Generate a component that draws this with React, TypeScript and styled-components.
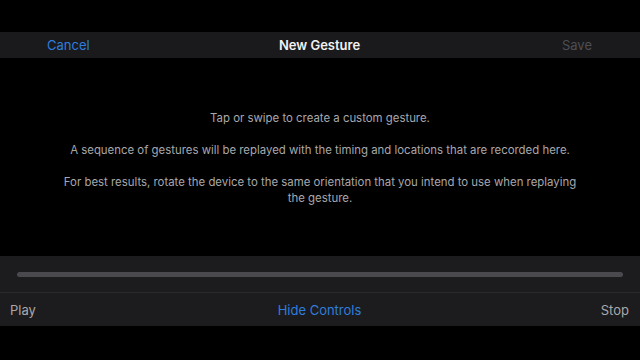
import React from 'react'
import styled, { createGlobalStyle } from 'styled-components'

const GlobalStyle = createGlobalStyle`
  html, body {
    margin: 0;
    padding: 0;
    background: #000;
    font-family: Inter, 'Noto Sans', sans-serif;
    -webkit-font-smoothing: antialiased;
  }
`

const Screen = styled.div`
  width: 640px;
  height: 360px;
  background: #000;
  display: flex;
  flex-direction: column;
  overflow: hidden;
`

const TopGap = styled.div`
  height: 32px;
  flex-shrink: 0;
`

const NavBar = styled.div`
  height: 26px;
  flex-shrink: 0;
  background: #1a1a1c;
  display: grid;
  grid-template-columns: 1fr auto 1fr;
  align-items: center;
  padding: 0 48px 0 47px;
`

const NavButton = styled.span<{ $disabled?: boolean; $align: 'left' | 'right' }>`
  font-size: 13px;
  color: ${(p) => (p.$disabled ? '#4e4e52' : '#2f7ddc')};
  justify-self: ${(p) => (p.$align === 'left' ? 'start' : 'end')};
`

const Title = styled.span`
  font-size: 13px;
  font-weight: 600;
  color: #f2f2f2;
`

const Content = styled.div`
  flex: 1;
  display: flex;
  flex-direction: column;
  align-items: center;
  padding-top: 52px;
  gap: 16px;
`

const Message = styled.p`
  margin: 0;
  max-width: 524px;
  text-align: center;
  font-size: 11.4px;
  line-height: 16px;
  color: #a8a8ac;
`

const Controls = styled.div`
  height: 70px;
  flex-shrink: 0;
  background: #1c1c1e;
  display: flex;
  flex-direction: column;
  margin-bottom: 34px;
`

const SliderRow = styled.div`
  height: 36px;
  display: flex;
  align-items: center;
  padding: 0 17px;
  border-bottom: 1px solid #2a2a2d;
`

const Track = styled.div`
  flex: 1;
  height: 5px;
  border-radius: 3px;
  background: #4a4a4e;
`

const ButtonRow = styled.div`
  flex: 1;
  display: grid;
  grid-template-columns: 1fr auto 1fr;
  align-items: center;
  padding: 0 11px 0 10px;
`

const ControlButton = styled.span<{ $accent?: boolean; $align: 'left' | 'center' | 'right' }>`
  font-size: 13px;
  color: ${(p) => (p.$accent ? '#2f7ddc' : '#a8a8ac')};
  justify-self: ${(p) => (p.$align === 'left' ? 'start' : p.$align === 'right' ? 'end' : 'center')};
`

export default function App() {
  return (
    <>
      <GlobalStyle />
      <Screen>
        <TopGap />
        <NavBar>
          <NavButton $align="left">Cancel</NavButton>
          <Title>New Gesture</Title>
          <NavButton $align="right" $disabled>Save</NavButton>
        </NavBar>
        <Content>
          <Message>Tap or swipe to create a custom gesture.</Message>
          <Message>A sequence of gestures will be replayed with the timing and locations that are recorded here.</Message>
          <Message>For best results, rotate the device to the same orientation that you intend to use when replaying the gesture.</Message>
        </Content>
        <Controls>
          <SliderRow>
            <Track />
          </SliderRow>
          <ButtonRow>
            <ControlButton $align="left">Play</ControlButton>
            <ControlButton $align="center" $accent>Hide Controls</ControlButton>
            <ControlButton $align="right">Stop</ControlButton>
          </ButtonRow>
        </Controls>
      </Screen>
    </>
  )
}
